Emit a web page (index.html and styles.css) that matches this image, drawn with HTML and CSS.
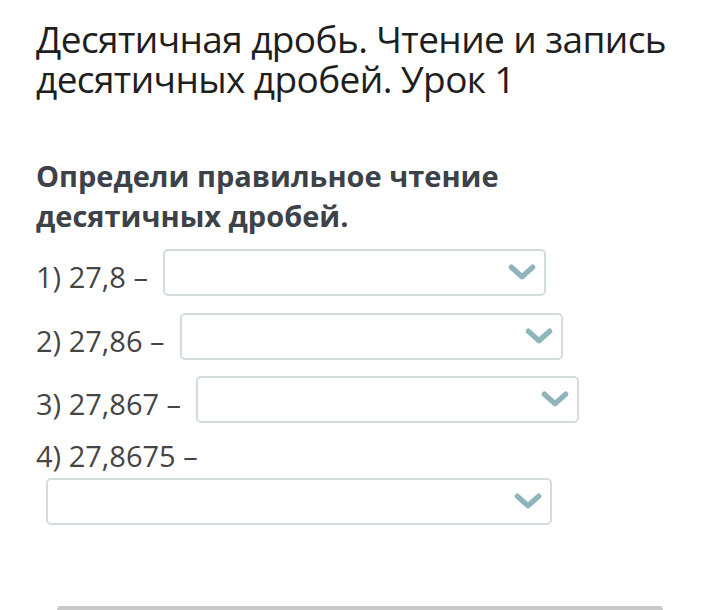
FILE: index.html
```html
<!DOCTYPE html>
<html lang="ru">
<head>
<meta charset="utf-8">
<link rel="stylesheet" href="styles.css">
</head>
<body>
<main class="page">
  <h1 class="title">Десятичная дробь. Чтение и запись десятичных дробей. Урок 1</h1>
  <p class="question">Определи правильное чтение десятичных дробей.</p>
  <div class="items">
    <div class="row">
      <span class="label">1) 27,8 –</span>
      <div class="select"><svg class="chev" viewBox="0 0 26 16"><path d="M3 3 L13 12 L23 3" /></svg></div>
    </div>
    <div class="row">
      <span class="label">2) 27,86 –</span>
      <div class="select"><svg class="chev" viewBox="0 0 26 16"><path d="M3 3 L13 12 L23 3" /></svg></div>
    </div>
    <div class="row">
      <span class="label">3) 27,867 –</span>
      <div class="select"><svg class="chev" viewBox="0 0 26 16"><path d="M3 3 L13 12 L23 3" /></svg></div>
    </div>
    <div class="row row4">
      <span class="label">4) 27,8675 –</span>
      <div class="select wide"><svg class="chev" viewBox="0 0 26 16"><path d="M3 3 L13 12 L23 3" /></svg></div>
    </div>
  </div>
  <div class="footer-bar"></div>
</main>
</body>
</html>
```
FILE: styles.css
```css
html, body {
  margin: 0;
  padding: 0;
  background: #ffffff;
}
body {
  font-family: "Open Sans", "Noto Sans", sans-serif;
  color: #2b2b2b;
  overflow: hidden;
  height: 610px;
}
.page {
  padding: 19px 0 0 36px;
  position: relative;
  height: 591px;
}
.title {
  margin: 0;
  font-weight: 400;
  font-size: 37px;
  letter-spacing: -0.6px;
  line-height: 40px;
  color: #1e1e1e;
  width: 670px;
}
.question {
  margin: 57px 0 0 0;
  font-weight: 700;
  font-size: 29px;
  line-height: 40px;
  color: #3d4249;
  width: 560px;
}
.items {
  margin-top: 13px;
  display: flex;
  flex-direction: column;
}
.row {
  display: flex;
  align-items: flex-start;
  gap: 15px;
  height: 47px;
  margin-bottom: 16.5px;
}
.label {
  font-size: 29px;
  color: #454545;
  line-height: 47px;
  padding-top: 4px;
  white-space: nowrap;
}
.select {
  box-sizing: border-box;
  width: 383px;
  height: 47px;
  border: 2px solid #d2dcdc;
  border-radius: 5px;
  display: flex;
  align-items: center;
  justify-content: flex-end;
  padding-right: 8px;
  background: #fff;
}
.chev {
  width: 28px;
  height: 17px;
}
.chev path {
  fill: none;
  stroke: #8fb4bb;
  stroke-width: 5;
  stroke-linecap: round;
  stroke-linejoin: round;
}
.row4 {
  flex-direction: column;
  height: auto;
  gap: 2px;
  margin-top: -3.5px;
}
.row4 .label {
  line-height: 40px;
  padding-top: 0;
}
.select.wide {
  width: 506px;
  margin-left: 10px;
}
.footer-bar {
  position: absolute;
  left: 57px;
  top: 606px;
  width: 606px;
  height: 10px;
  background: #c9c9c9;
  border-radius: 4px 4px 0 0;
}
```
